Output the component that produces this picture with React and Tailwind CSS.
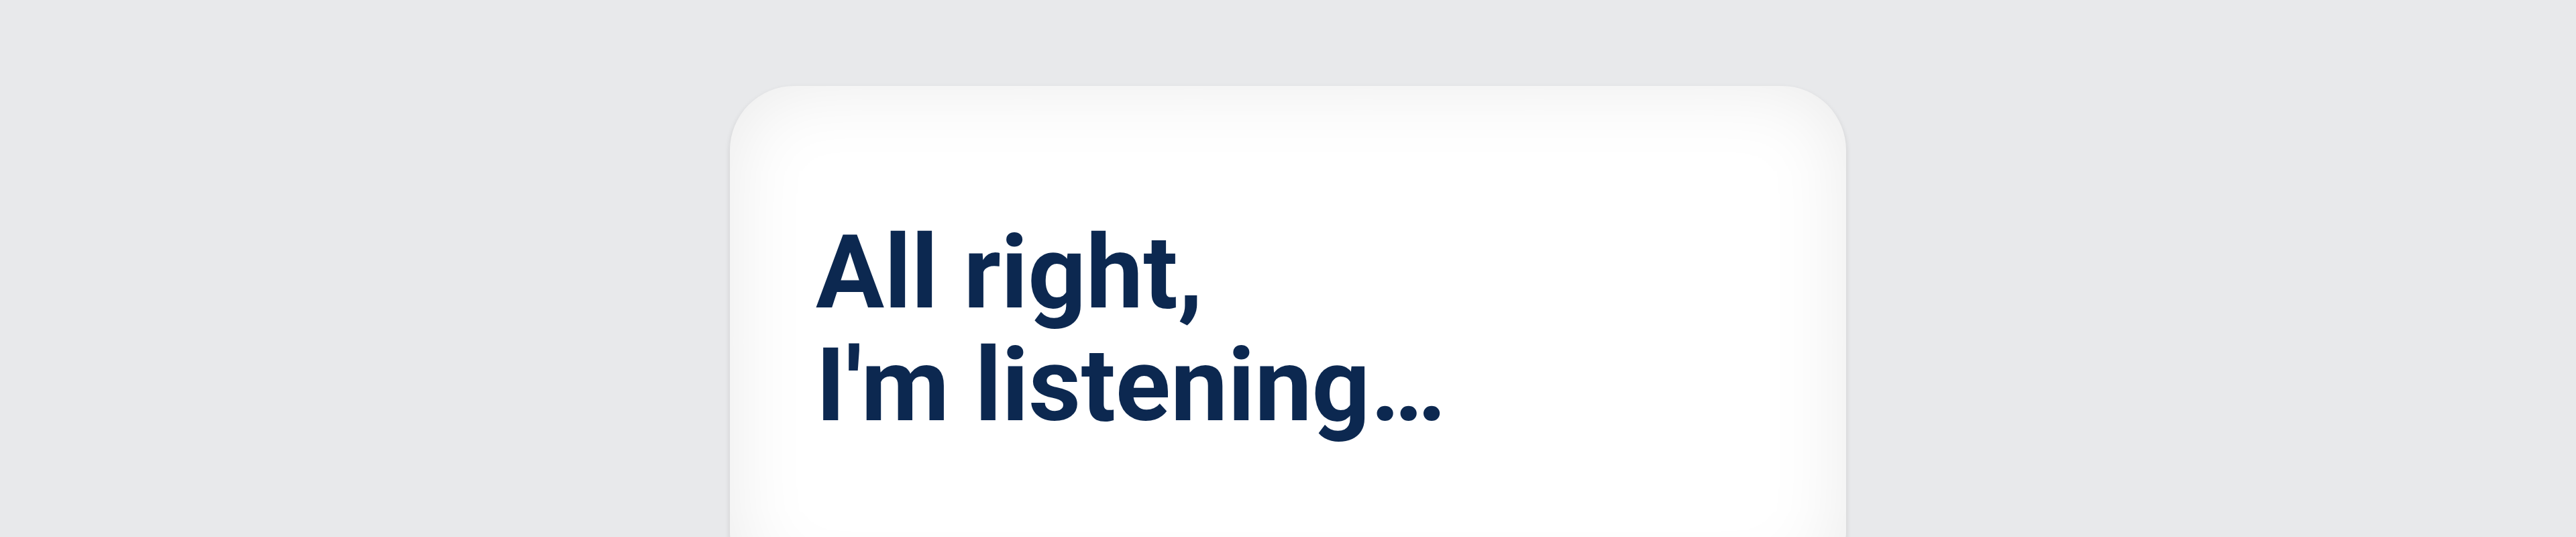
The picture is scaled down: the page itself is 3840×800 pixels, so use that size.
import React from 'react';

const ListeningCard = () => (
  <div className="w-[1664px] min-h-[760px] mx-auto rounded-[96px] bg-white pt-[194px] px-[128px] shadow-[inset_0_0_120px_rgba(0,0,0,0.085),0_4px_8px_rgba(0,0,0,0.12)]">
    <h1 className="text-[152px] leading-[168px] font-bold text-[#0c2850] font-['Roboto',sans-serif]">
      All right,
      <br />
      I&apos;m listening…
    </h1>
  </div>
);

export default function App() {
  return (
    <div className="h-[800px] overflow-hidden bg-[#e8e9eb] pt-[128px]">
      <ListeningCard />
    </div>
  );
}
